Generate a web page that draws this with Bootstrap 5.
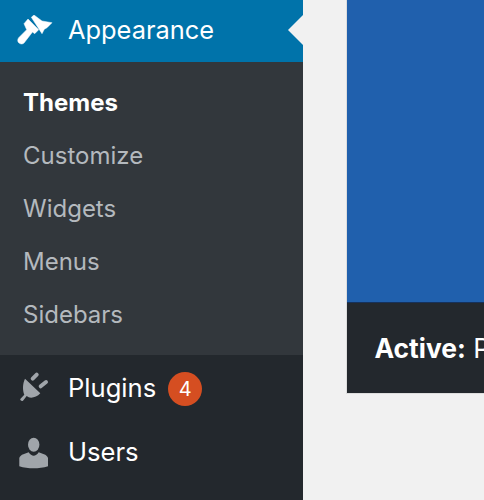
<!DOCTYPE html>
<html lang="en"><head><meta charset="utf-8"><title>Appearance</title>
<link href="https://cdn.jsdelivr.net/npm/bootstrap@5.3.0/dist/css/bootstrap.min.css" rel="stylesheet">
<style>
html,body{height:500px;overflow:hidden}
body{background:#f1f1f1;font-family:Inter,"Liberation Sans",sans-serif;-webkit-font-smoothing:antialiased}
.wp-shell{height:500px}
.wp-side{width:303px;background:#23282d;flex:none}
.wp-current{height:62px;background:#0073aa;color:#fff;font-size:25.4px;padding-left:15px}
.wp-current span:first-of-type{padding-bottom:2px}
.wp-notch{position:absolute;right:0;top:15px;width:0;height:0;border:15px solid transparent;border-left:0;border-right:15px solid #f1f1f1}
.wp-icon{width:40px;flex:none;margin-right:13px}
.wp-brush{margin-top:2px}
.wp-sub{background:#32373c;height:293px;padding:14px 0 0 23px}
.wp-sub a{display:block;height:53px;line-height:53px;font-size:24px;color:#b4b9be;text-decoration:none}
.wp-sub a.wp-on{color:#fff;font-weight:700}
.wp-item{height:65px;color:#fff;font-size:25.6px;padding-left:15px}
.wp-first{padding-top:1px}
.wp-count{width:34px;height:34px;background:#d54e21;font-size:20px;margin:1px 0 0 12px}
.wp-main{padding-left:43.5px;min-width:0;overflow:hidden}
.wp-theme{box-shadow:0 0 0 1px #ddd}
.wp-shot{height:303px;background:#2060ad;border-bottom:1px solid #16315a}
.wp-bar{height:90px;background:#23282d;color:#fff;font-size:26.4px;padding:2px 0 0 28px;white-space:nowrap;overflow:hidden}
.wp-bar b{font-weight:700}
</style></head>
<body>
<div class="d-flex wp-shell">
<nav class="wp-side">
<div class="wp-current d-flex align-items-center position-relative">
<svg class="wp-icon wp-brush" height="34" viewBox="0 0 40 34"><g fill="#fff" stroke="#fff" stroke-width=".5" stroke-linejoin="round"><path d="M9 8.700 13 4 23.700 14.700 19.700 18.700 17.500 17 9 28C7 29.800 4 28.800 3 26.700 2.500 25.300 2.800 24 3.700 22.700L11.700 14.700z"/><path d="M16.300 2.300 19 0 27 6 37 7.700 32 12.700 29.300 14.300 27 18.700z"/></g></svg>
<span>Appearance</span><span class="wp-notch"></span>
</div>
<div class="wp-sub">
<a class="wp-on" href="#">Themes</a><a href="#">Customize</a><a href="#">Widgets</a><a href="#">Menus</a><a href="#">Sidebars</a>
</div>
<div class="wp-item wp-first d-flex align-items-center">
<svg class="wp-icon" height="34" viewBox="0 0 40 34"><path fill="#a0a5aa" d="M10 7.700 25.300 22.300C22 26 17 27.500 13.700 26.300L11.700 25 8 29.700C6.800 30.500 4.800 29.300 5.300 28L9.300 23.700C7.500 19 7.500 13 10 7.700z"/><path fill="none" stroke="#a0a5aa" stroke-width="4" stroke-linecap="round" d="M17.700 7.700 21.700 3.700M25.700 15.300 31 11"/></svg>
<span>Plugins</span><span class="wp-count rounded-circle d-flex align-items-center justify-content-center">4</span>
</div>
<div class="wp-item d-flex align-items-center">
<svg class="wp-icon" height="34" viewBox="0 0 40 34"><g fill="#a0a5aa"><ellipse cx="18.700" cy="8.700" rx="5.700" ry="7"/><path d="M4.300 30.300V22C4.800 20.500 5.700 19.500 7 18.700L13.700 16.300C15 18.500 17 19.700 18.700 19.700S22.400 18.500 23.700 16.300L30.300 18.700C31.600 19.500 32.500 20.500 33 22V30.300C24 33 13 33 4.300 30.300z"/></g></svg>
<span>Users</span>
</div>
</nav>
<main class="wp-main flex-grow-1">
<div class="wp-theme">
<div class="wp-shot"></div>
<div class="wp-bar d-flex align-items-center"><span><b>Active:</b> P</span></div>
</div>
</main>
</div>
</body></html>
